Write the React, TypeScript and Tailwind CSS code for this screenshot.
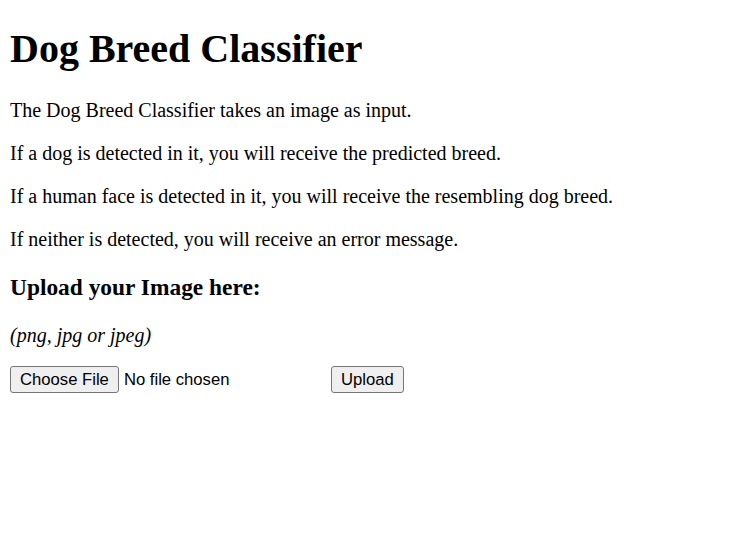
export default function App() {
  return (
    <div className="min-h-[537px] bg-white px-[10px] text-black" style={{ fontFamily: '"Liberation Serif", "Times New Roman", serif' }}>
      <div className="pt-px -mt-px">
        <h1 className="mt-[25.8px] mb-[26.8px] text-[40px] font-bold leading-[46px]">Dog Breed Classifier</h1>
        <p className="my-[20px] text-[20px] leading-[23px]">The Dog Breed Classifier takes an image as input.</p>
        <p className="my-[20px] text-[20px] leading-[23px]">If a dog is detected in it, you will receive the predicted breed.</p>
        <p className="my-[20px] text-[20px] leading-[23px]">If a human face is detected in it, you will receive the resembling dog breed.</p>
        <p className="my-[20px] text-[20px] leading-[23px]">If neither is detected, you will receive an error message.</p>
        <h3 className="my-[23.4px] text-[23.4px] font-bold leading-[27px]">Upload your Image here:</h3>
        <p className="mt-[20px] mb-[19px] text-[20px] leading-[23px] italic">(png, jpg or jpeg)</p>
        <div className="flex items-center text-[16.67px]" style={{ fontFamily: '"Liberation Sans", Arial, sans-serif' }}>
          <div className="flex w-[316px] items-center">
            <span className="box-border flex h-[27px] items-center rounded-[3px] border border-[#767676] bg-[#efefef] px-[9px]">Choose File</span>
            <span className="ml-[5px]">No file chosen</span>
          </div>
          <span className="ml-[5px] box-border flex h-[27px] items-center rounded-[3px] border border-[#767676] bg-[#efefef] px-[9px]">Upload</span>
        </div>
      </div>
    </div>
  );
}
